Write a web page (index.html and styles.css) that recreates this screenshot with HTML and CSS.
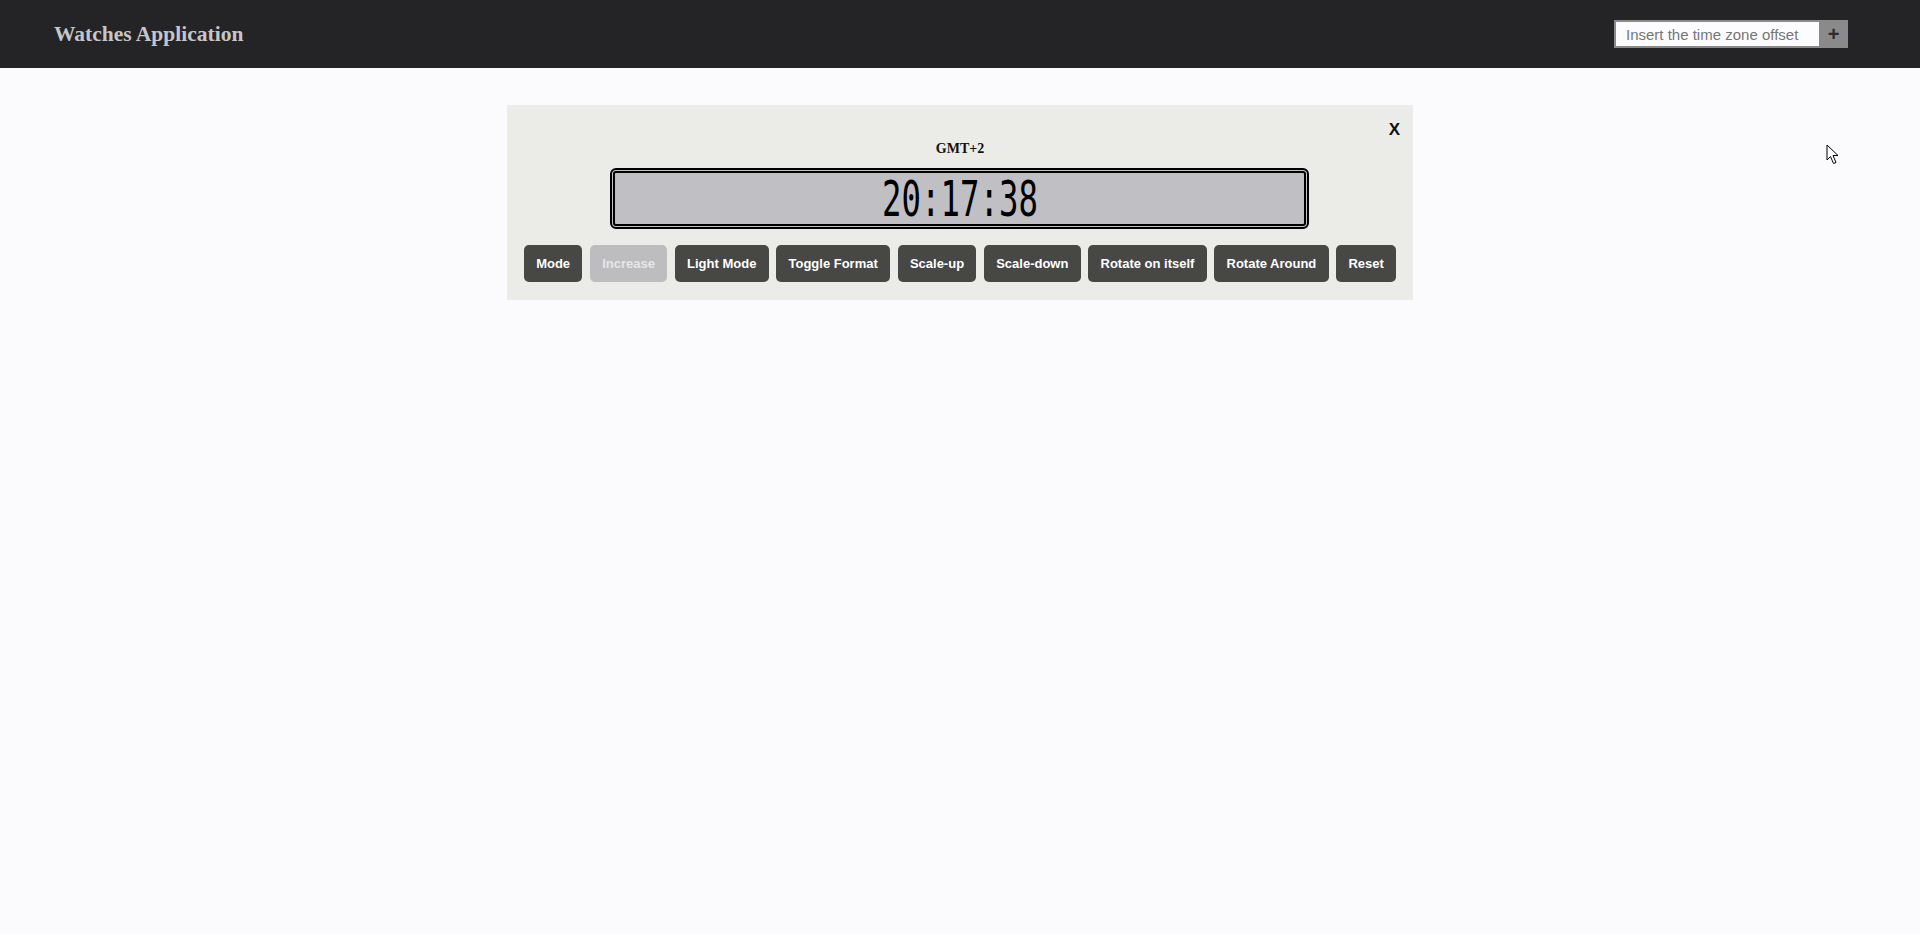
FILE: index.html
```html
<!DOCTYPE html>
<html lang="en">
<head>
<meta charset="utf-8">
<title>Watches Application</title>
<link rel="stylesheet" href="styles.css">
</head>
<body>
<header class="topbar">
  <h1 class="brand">Watches Application</h1>
  <form class="tz-form">
    <input class="tz-input" type="text" placeholder="Insert the time zone offset">
    <button class="tz-add" type="button">+</button>
  </form>
</header>
<main class="watches">
  <section class="watch">
    <button class="watch-close" type="button">X</button>
    <div class="watch-zone">GMT+2</div>
    <div class="watch-display"><span class="watch-time">20:17:38</span></div>
    <div class="watch-actions">
      <button class="btn" type="button">Mode</button>
      <button class="btn btn-disabled" type="button">Increase</button>
      <button class="btn" type="button">Light Mode</button>
      <button class="btn" type="button">Toggle Format</button>
      <button class="btn" type="button">Scale-up</button>
      <button class="btn" type="button">Scale-down</button>
      <button class="btn" type="button">Rotate on itself</button>
      <button class="btn" type="button">Rotate Around</button>
      <button class="btn" type="button">Reset</button>
    </div>
  </section>
</main>
<svg class="cursor" width="14" height="21" viewBox="0 0 14 21"><path d="M1 1 L1 16 L4.5 12.5 L7.5 19.5 L10 18.5 L7 11.5 L12 11.5 Z" fill="#fff" stroke="#000" stroke-width="1"/></svg>
</body>
</html>
```
FILE: styles.css
```css
html, body {
  margin: 0;
  padding: 0;
}
body {
  background: #fbfbfd;
  font-family: "Liberation Sans", Arial, sans-serif;
  min-height: 934px;
}
.topbar {
  height: 68px;
  background: #242427;
  display: flex;
  align-items: center;
  justify-content: space-between;
  padding: 0 72px 0 54px;
}
.brand {
  margin: 1px 0 0;
  font-family: "Liberation Serif", "Times New Roman", serif;
  font-weight: bold;
  font-size: 21.5px;
  color: #c6c6c8;
}
.tz-form {
  display: flex;
  height: 28px;
}
.tz-input {
  width: 205px;
  height: 28px;
  box-sizing: border-box;
  border: 2px solid #8a8a8a;
  border-right: none;
  background: #fcfcff;
  padding: 0 0 0 10px;
  font-family: "Liberation Sans", Arial, sans-serif;
  font-size: 15px;
  color: #333;
  outline: none;
}
.tz-input::placeholder {
  color: #767676;
}
.tz-add {
  width: 29px;
  height: 28px;
  border: none;
  background: #8a8a8a;
  color: #2c2c2c;
  font-family: "Liberation Sans", Arial, sans-serif;
  font-weight: bold;
  font-size: 20px;
  line-height: 28px;
  padding: 0;
}
.watches {
  display: flex;
  justify-content: center;
  padding-top: 37px;
}
.watch {
  position: relative;
  background: #ebebe7;
  padding: 0 17px 18px;
  display: flex;
  flex-direction: column;
  align-items: center;
}
.watch-close {
  position: absolute;
  top: 16px;
  right: 13px;
  border: none;
  background: none;
  padding: 0;
  font-family: "Liberation Sans", Arial, sans-serif;
  font-weight: bold;
  font-size: 17px;
  line-height: 17px;
  color: #111;
}
.watch-zone {
  margin-top: 36px;
  font-family: "Liberation Serif", "Times New Roman", serif;
  font-weight: bold;
  font-size: 14px;
  line-height: 16px;
  color: #111;
}
.watch-display {
  margin-top: 11px;
  width: 699px;
  height: 61px;
  box-sizing: border-box;
  border: 5px double #000;
  border-radius: 6px;
  background: #bfbfc4;
  display: flex;
  align-items: center;
  justify-content: center;
  overflow: hidden;
}
.watch-time {
  display: inline-block;
  font-family: "DejaVu Sans Mono", monospace;
  font-size: 49px;
  line-height: 49px;
  color: #000;
  transform: scaleX(0.66);
  margin-top: 2px;
}
.watch-actions {
  margin-top: 16px;
  display: flex;
  gap: 7.5px;
}
.btn {
  border: none;
  border-radius: 5px;
  background: #474746;
  color: #fff;
  font-family: "Liberation Sans", Arial, sans-serif;
  font-weight: bold;
  font-size: 13px;
  line-height: 15px;
  padding: 11px 12.3px;
  white-space: nowrap;
}
.btn-disabled {
  background: #bdbdbf;
  color: #e6e6e6;
}
.cursor {
  position: absolute;
  left: 1826px;
  top: 144px;
}
```
